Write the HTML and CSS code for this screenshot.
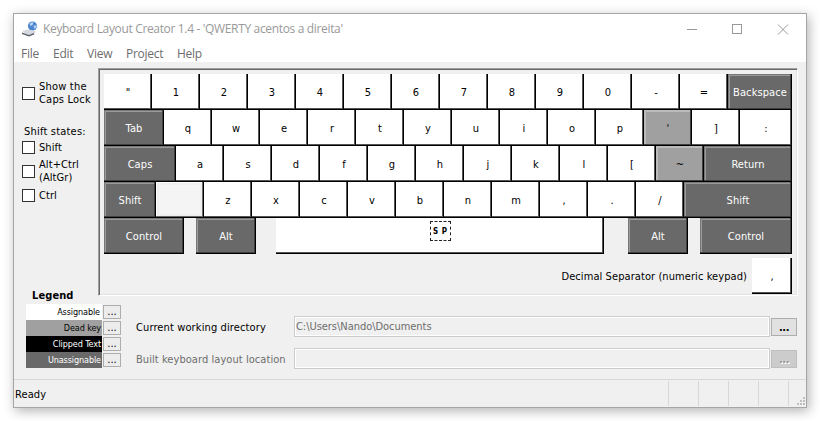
FILE: index.html
```html
<!DOCTYPE html>
<html lang="en">
<head>
<meta charset="utf-8">
<title>Keyboard Layout Creator</title>
<link rel="stylesheet" href="styles.css">
</head>
<body>
<div class="window">
  <header class="titlebar">
    <svg class="app-icon" width="16" height="16" viewBox="0 0 16 16"><circle cx="10.500" cy="5" r="4.600" fill="#4d86cf"/><path d="M7.500 3q2-2.500 4-1.500l-1 2.500-2 1zM11.500 5l3-1v2l-2 2z" fill="#b9d6f3"/><path d="M1 9.500l5-1 8 2-2 3-6 .5-5-3z" fill="#d5d8de"/><path d="M0 11.500l7 2.500 5-2v1.500l-5 2-7-2.500z" fill="#59606c"/></svg>
    <h1 class="title">Keyboard Layout Creator 1.4 - 'QWERTY acentos a direita'</h1>
    <svg class="controls" width="102" height="11" viewBox="0 0 102 11" fill="none" stroke="#999" shape-rendering="crispEdges"><path d="M0 5.500h10M45.500.5h9v9h-9z"/><path d="M91 .5l10 10M101 .5l-10 10" shape-rendering="auto"/></svg>
  </header>
  <nav class="menu"><span class="m1">File</span><span class="m2">Edit</span><span class="m3">View</span><span class="m4">Project</span><span class="m5">Help</span></nav>
  <main class="content">
    <aside class="side">
      <label class="check caps"><i class="box"></i><span>Show the<br>Caps Lock</span></label>
      <p class="states">Shift states:</p>
      <label class="check shift"><i class="box"></i><span>Shift</span></label>
      <label class="check altgr"><i class="box"></i><span>Alt+Ctrl<br>(AltGr)</span></label>
      <label class="check ctrl"><i class="box"></i><span>Ctrl</span></label>
      <h2 class="legend-title">Legend</h2>
      <div class="legend">
        <span class="tag assignable">Assignable</span><b class="more">...</b>
        <span class="tag deadkey">Dead key</span><b class="more">...</b>
        <span class="tag clipped">Clipped Text</span><b class="more">...</b>
        <span class="tag unassignable">Unassignable</span><b class="more">...</b>
      </div>
    </aside>
    <section class="right">
      <div class="panel">
        <div class="row"><b class="key">"</b><b class="key">1</b><b class="key">2</b><b class="key">3</b><b class="key">4</b><b class="key">5</b><b class="key">6</b><b class="key">7</b><b class="key">8</b><b class="key">9</b><b class="key">0</b><b class="key">-</b><b class="key">=</b><b class="key dark fill">Backspace</b></div>
        <div class="row"><b class="key dark tab">Tab</b><b class="key">q</b><b class="key">w</b><b class="key">e</b><b class="key">r</b><b class="key">t</b><b class="key">y</b><b class="key">u</b><b class="key">i</b><b class="key">o</b><b class="key">p</b><b class="key dead">'</b><b class="key">]</b><b class="key fill">:</b></div>
        <div class="row"><b class="key dark capskey">Caps</b><b class="key">a</b><b class="key">s</b><b class="key">d</b><b class="key">f</b><b class="key">g</b><b class="key">h</b><b class="key">j</b><b class="key">k</b><b class="key">l</b><b class="key">[</b><b class="key dead">~</b><b class="key dark fill">Return</b></div>
        <div class="row"><b class="key dark lshift">Shift</b><b class="key empty"></b><b class="key">z</b><b class="key">x</b><b class="key">c</b><b class="key">v</b><b class="key">b</b><b class="key">n</b><b class="key">m</b><b class="key">,</b><b class="key">.</b><b class="key">/</b><b class="key dark fill">Shift</b></div>
        <div class="row"><b class="key dark lctrl">Control</b><b class="key dark lalt">Alt</b><b class="key space"><span class="sp">S P</span></b><b class="key dark ralt">Alt</b><b class="key dark rctrl">Control</b></div>
        <div class="decimal"><span class="decimal-label">Decimal Separator (numeric keypad)</span><b class="key comma">,</b></div>
      </div>
      <div class="field first"><span class="label l1">Current working directory</span><span class="input">C:\Users\Nando\Documents</span><b class="browse">...</b></div>
      <div class="field off"><span class="label l2">Built keyboard layout location</span><span class="input"></span><b class="browse">...</b></div>
    </section>
  </main>
  <footer class="status"><span class="ready">Ready</span><i class="cell"></i><i class="cell"></i><i class="cell"></i><i class="cell"></i><span class="cell last"><svg width="9" height="9" viewBox="0 0 9 9" fill="#bfbfbf"><path d="M6 0h2v2H6zM3 3h2v2H3zM6 3h2v2H6zM0 6h2v2H0zM3 6h2v2H3zM6 6h2v2H6z"/></svg></span></footer>
</div>
</body>
</html>
```
FILE: styles.css
```css
* { box-sizing: border-box; }
body { margin: 0; padding: 13px; height: 421px; background: #fff; overflow: hidden; font: 11px/13px "DejaVu Sans Condensed", "DejaVu Sans", sans-serif; letter-spacing: .08px; color: #000; }
h1, h2, p { margin: 0; font-weight: normal; }
i, b { font-style: normal; font-weight: normal; }
.window { width: 794px; height: 395px; border: 1px solid #a5a5a5; background: #f0f0f0; box-shadow: 2px 3px 11px rgba(0,0,0,.3); display: flex; flex-direction: column; }
.titlebar { height: 30px; background: #fff; display: flex; align-items: center; padding: 0 17px 0 8px; }
.app-icon { margin-right: 5px; }
.title { font: 12px/16px "Open Sans", sans-serif; letter-spacing: -.34px; color: #999; flex: 1; white-space: nowrap; }
.menu { height: 18px; background: #fff; display: flex; padding-left: 7px; font: 12px/20px "Open Sans", sans-serif; letter-spacing: -.25px; color: #6d6d6d; }
.menu span { white-space: nowrap; }
.m1 { width: 32px; } .m2 { width: 34px; } .m3 { width: 39px; } .m4 { width: 51px; }
.content { height: 317px; display: flex; }
.side { width: 84px; padding: 18px 0 0 8px; white-space: nowrap; }
.check { display: flex; align-items: center; }
.box { width: 13px; height: 13px; border: 1px solid #333; background: #fff; margin-right: 4px; flex: none; }
.caps { height: 26px; letter-spacing: .2px; }
.states { margin: 19px 0 0 2px; letter-spacing: .2px; }
.shift { height: 13px; margin-top: 3px; }
.altgr { height: 26px; margin-top: 4px; }
.ctrl { height: 13px; margin-top: 5px; }
.legend-title { margin: 87px 0 0 10px; font-size: 11px; font-weight: bold; line-height: 13px; letter-spacing: .1px; }
.legend { margin: 2px 0 0 4px; width: 95px; display: grid; grid-template-columns: 76px 18px; column-gap: 1px; grid-auto-rows: 16px; }
.tag { text-align: right; padding-right: 1px; font-size: 9px; line-height: 16px; letter-spacing: -.1px; }
.assignable { background: #fff; padding-right: 2px; }
.deadkey { background: #a0a0a0; }
.clipped { background: #000; color: #fff; }
.unassignable { background: #696969; color: #fff; }
.more { height: 14px; margin-top: 1px; border: 1px solid #adadad; background: #ececec; text-align: center; line-height: 11px; }
.right { flex: 1; padding-top: 6px; }
.panel { width: 700px; height: 228px; border: 1px solid; border-color: #a0a0a0 #fff #fff #a0a0a0; box-shadow: inset 1px 1px #696969, inset -1px -1px #e3e3e3; padding: 5px; white-space: nowrap; }
.row { width: 688px; display: flex; }
.key { width: 48px; height: 36px; flex: none; border: solid #000; border-width: 0 1px 1px 0; box-shadow: inset -1px -1px #555; background: #fff; display: flex; align-items: center; justify-content: center; padding: 1px 0 0 1px; }
.dark { background: #696969; color: #fff; box-shadow: inset -1px -1px #404040, inset 1px 1px #777, inset 2px 2px #9a9a9a; }
.dead { background: #a0a0a0; box-shadow: inset -1px -1px #404040, inset 2px 2px #bbb; }
.empty { background: #f4f4f4; box-shadow: inset -1px -1px #696969, inset 1px 1px #fff, inset 0 0 0 3px #efefef; }
.fill { flex: 1; }
.tab { width: 60px; } .capskey { width: 72px; } .lshift { width: 52px; } .lctrl { width: 80px; }
.lalt { width: 60px; margin: 0 20px 0 12px; }
.space { width: 328px; align-items: flex-start; padding-top: 3px; }
.ralt { width: 60px; margin: 0 12px 0 24px; }
.rctrl { width: 92px; }
.sp { width: 21px; height: 20px; border: 1px dashed #222; font-size: 8px; font-weight: bold; text-align: center; line-height: 19px; word-spacing: 1px; }
.decimal { display: flex; width: 688px; margin-top: 4px; justify-content: flex-end; align-items: center; }
.decimal-label { margin-right: 5px; }
.comma { width: 40px; }
.field { display: flex; align-items: center; height: 21px; padding-left: 38px; margin-top: 11px; white-space: nowrap; }
.first { margin-top: 20px; }
.label { width: 158px; padding-top: 1px; letter-spacing: .12px; }
.l2 { letter-spacing: .06px; }
.input { width: 476px; height: 21px; border: 1px solid #ccc; box-shadow: inset 0 0 0 1px #fff; padding-left: 1px; line-height: 19px; letter-spacing: -.04px; color: #6d6d6d; }
.browse { width: 26px; height: 18px; margin-left: 1px; border: 1px solid #adadad; background: #e1e1e1; text-align: center; font-weight: bold; line-height: 17px; letter-spacing: -.4px; }
.off { color: #6d6d6d; }
.off .browse { background: #ccc; border-color: #bfbfbf; color: #999; text-shadow: 1px 1px #fff; }
.status { height: 28px; border-top: 1px solid #d7d7d7; display: flex; padding-top: 1px; }
.ready { flex: 1; padding: 7px 0 0 1px; }
.cell { width: 30px; height: 25px; border-left: 1px solid #d7d7d7; }
.last { width: 18px; display: flex; align-items: flex-end; justify-content: flex-end; }
```
